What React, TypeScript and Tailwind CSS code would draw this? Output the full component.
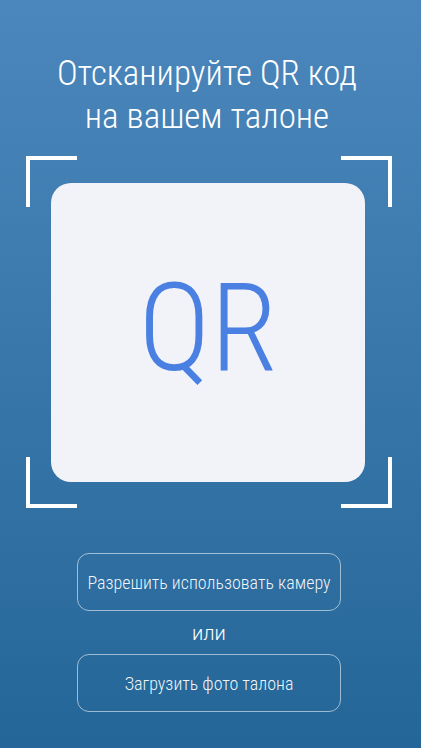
export default function App() {
  return (
    <div
      className="w-[421px] h-[748px] pr-[3px] flex flex-col items-center bg-gradient-to-b from-[#4b87bc] to-[#246698] text-white overflow-hidden"
      style={{ fontFamily: "Roboto, 'Noto Sans', sans-serif" }}
    >
      {/* Title */}
      <h1 className="mt-[52px] mr-[4px] text-center text-[35px] leading-[43px] font-light [font-stretch:condensed]">
        Отсканируйте QR код
        <br />
        на вашем талоне
      </h1>

      {/* Scanner frame */}
      <div className="relative mt-[18px] w-[366px] h-[352px] flex items-center justify-center">
        <div className="absolute left-0 top-0 w-[51px] h-[51px] border-l-4 border-t-4 border-white" />
        <div className="absolute right-0 top-0 w-[51px] h-[51px] border-r-4 border-t-4 border-white" />
        <div className="absolute left-0 bottom-0 w-[51px] h-[51px] border-l-4 border-b-4 border-white" />
        <div className="absolute right-0 bottom-0 w-[51px] h-[51px] border-r-4 border-b-4 border-white" />
        <div className="w-[314px] h-[299px] mr-[2px] rounded-[20px] bg-[#f2f3f9] flex items-center justify-center">
          <span className="-mt-[6px] text-[122px] leading-none font-light text-[#4a80e2] [font-stretch:condensed]">QR</span>
        </div>
      </div>

      {/* Actions */}
      <button className="mt-[45px] w-[264px] h-[58px] rounded-xl border border-white/55 text-[18px] font-light text-white/95 [font-stretch:condensed]">
        Разрешить использовать камеру
      </button>
      <div className="mt-[9px] text-[20px] leading-[26px] font-light">или</div>
      <button className="mt-[8px] w-[264px] h-[58px] rounded-xl border border-white/55 text-[18px] font-light text-white/95 [font-stretch:condensed]">
        Загрузить фото талона
      </button>
    </div>
  );
}
